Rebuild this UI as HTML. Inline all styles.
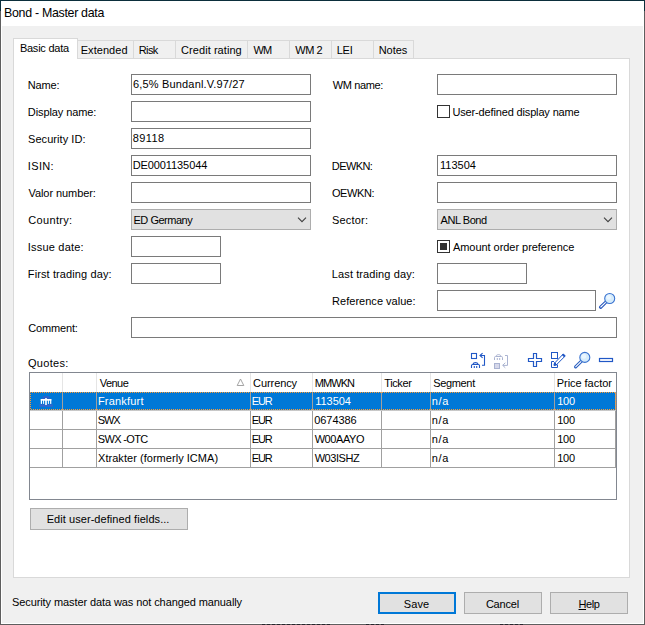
<!DOCTYPE html>
<html lang="en">
<head>
<meta charset="utf-8">
<title>Bond - Master data</title>
<style>
*{box-sizing:border-box;margin:0;padding:0}
html,body{width:645px;height:625px;overflow:hidden;background:#f0f0f0}
body{position:relative;font-family:"Liberation Sans",sans-serif;font-size:11px;color:#000;line-height:13px}
.a{position:absolute}
.tx{position:absolute;white-space:nowrap;z-index:5}
#win{position:absolute;left:0;top:0;width:645px;height:625px;background:#f0f0f0;border:1px solid #5e5e5e;border-top-color:#0b2e3b}
#win i{position:absolute;left:0;top:0;width:643px;height:623px;border:1px solid #fff;border-top:none}
#title{position:absolute;left:1px;top:1px;width:643px;height:25px;background:#fff}
.tab{position:absolute;top:40px;height:18px;border-top:1px solid #d9d9d9;border-right:1px solid #d9d9d9;z-index:2}
#seltab{position:absolute;left:13px;top:38px;width:65px;height:21px;background:#fff;border:1px solid #d9d9d9;border-bottom:none;z-index:3}
#page{position:absolute;left:13px;top:58px;width:617px;height:520px;background:#fff;border:1px solid #d9d9d9;z-index:1}
.inp{position:absolute;height:21px;width:180px;background:#fff;border:1px solid #7a7a7a;z-index:2}
.cmb{position:absolute;height:21px;width:180px;background:#e1e1e1;border:1px solid #adadad;z-index:2}
.chk{position:absolute;width:13px;height:13px;border:1px solid #333;background:#fff;z-index:2}
.btn{position:absolute;height:22px;width:78px;background:#e1e1e1;border:1px solid #adadad;z-index:2}
#grid{position:absolute;left:29px;top:372px;width:588px;height:128px;background:#fff;border:1px solid #828790;z-index:2}
.vl{position:absolute;width:1px;background:#a0a0a0;z-index:3}
.hl{position:absolute;height:1px;background:#a0a0a0;z-index:3}
.hv{position:absolute;width:1px;background:#e5e5e5;z-index:3}
svg{position:absolute;z-index:4;overflow:visible}
</style>
</head>
<body>
<div id="win"><i></i></div>
<div id="title"></div>
<div class="a" style="left:0;top:0;width:1px;height:11px;background:#0b2e3b"></div>
<div class="a" style="left:644px;top:0;width:1px;height:11px;background:#0b2e3b"></div>

<div class="a" style="left:262px;top:624px;width:70px;height:1px;z-index:6;background:repeating-linear-gradient(90deg,#26262e 0,#26262e 3px,#5e5e5e 3px,#5e5e5e 5px)"></div>
<div class="a" style="left:366px;top:624px;width:18px;height:1px;z-index:6;background:repeating-linear-gradient(90deg,#26262e 0,#26262e 3px,#5e5e5e 3px,#5e5e5e 5px)"></div>
<div class="a" style="left:500px;top:624px;width:25px;height:1px;z-index:6;background:repeating-linear-gradient(90deg,#26262e 0,#26262e 3px,#5e5e5e 3px,#5e5e5e 5px)"></div>
<div id="seltab"></div>
<div class="tab" style="left:78px;width:56px"></div>
<div class="tab" style="left:134px;width:42px"></div>
<div class="tab" style="left:176px;width:72px"></div>
<div class="tab" style="left:248px;width:42px"></div>
<div class="tab" style="left:290px;width:42px"></div>
<div class="tab" style="left:332px;width:42px"></div>
<div class="tab" style="left:374px;width:40px"></div>
<div id="page"></div>

<!-- inputs left -->
<div class="inp" style="left:131px;top:74px"></div>
<div class="inp" style="left:131px;top:101px"></div>
<div class="inp" style="left:131px;top:128px"></div>
<div class="inp" style="left:131px;top:155px"></div>
<div class="inp" style="left:131px;top:182px"></div>
<div class="cmb" style="left:131px;top:209px"></div>
<svg style="left:297px;top:216px" width="10" height="7" viewBox="0 0 10 7"><path d="M1 1.7 L5 5.7 L9 1.7" fill="none" stroke="#404040" stroke-width="1.1"/></svg>
<div class="inp" style="left:131px;top:236px;width:90px"></div>
<div class="inp" style="left:131px;top:263px;width:90px"></div>
<div class="inp" style="left:131px;top:317px;width:486px"></div>
<!-- inputs right -->
<div class="inp" style="left:437px;top:74px"></div>
<div class="chk" style="left:437px;top:105px"></div>
<div class="inp" style="left:437px;top:155px"></div>
<div class="inp" style="left:437px;top:182px"></div>
<div class="cmb" style="left:437px;top:209px"></div>
<svg style="left:603px;top:216px" width="10" height="7" viewBox="0 0 10 7"><path d="M1 1.7 L5 5.7 L9 1.7" fill="none" stroke="#404040" stroke-width="1.1"/></svg>
<div class="chk" style="left:437px;top:240px"><div class="a" style="left:2px;top:2px;width:7px;height:7px;background:#333"></div></div>
<div class="inp" style="left:437px;top:263px;width:90px"></div>
<div class="inp" style="left:437px;top:290px;width:159px"></div>

<!-- magnifier next to reference value -->
<svg style="left:597px;top:291px" width="20" height="20" viewBox="0 0 20 20">
  <path d="M8.6 11.4 L3.6 16.2" stroke="#2455bd" stroke-width="3.3" stroke-linecap="round"/>
  <path d="M8.6 11.4 L3.8 16.0" stroke="#fff" stroke-width="1.1" stroke-linecap="round"/>
  <circle cx="12.7" cy="7.5" r="5" fill="#d6ecfb" stroke="#3a73d0" stroke-width="1.1"/>
  <circle cx="11.6" cy="6.4" r="2.4" fill="#eaf6ff"/>
</svg>

<!-- toolbar icons -->
<svg style="left:468px;top:350px" width="150" height="22" viewBox="468 350 150 22" fill="none" stroke="#2158c6" stroke-width="1">
  <!-- icon1 -->
  <rect x="471.5" y="353.5" width="5" height="5" stroke-width="1.1"/>
  <path d="M482.6 353.1 L480 355.5 L482.6 357.9 M480.2 355.5 H484.5 V365.3 H482" stroke-width="1.1"/>
  <path d="M473 364.2 C473.6 362.1 477.4 362.1 478 364.2" stroke-width="1.1"/>
  <path d="M471.5 368 V365.6 Q471.5 364.5 472.6 364.5 H478.4 Q479.5 364.5 479.5 365.6 V368 M474.3 366 V368 M476.7 366 V368" stroke-width="1.1"/>
  <!-- icon2 (disabled) -->
  <g stroke="#aab3d1">
  <path d="M496 356.2 C496.6 354.1 500.4 354.1 501 356.2"/>
  <path d="M494.5 360 V357.6 Q494.5 356.5 495.6 356.5 H501.4 Q502.5 356.5 502.5 357.6 V360 M497.3 358 V360 M499.7 358 V360"/>
  <path d="M505 355.5 H507.5 V365.4 H502.8 M505.3 362.8 L502.7 365.3 L505.3 367.8"/>
  <rect x="494.5" y="363.5" width="5" height="5" fill="#d6d8ea"/>
  </g>
  <!-- plus -->
  <path d="M533.5 353.5 H536.5 V358.5 H541.5 V361.5 H536.5 V366.5 H533.5 V361.5 H528.5 V358.5 H533.5 Z" stroke-width="1.2"/>
  <!-- edit -->
  <rect x="551.5" y="352.5" width="6" height="6"/>
  <path d="M554 361.5 H551.5 V367.5 H557.5 V364.5"/>
  <path d="M563.2 354 L565.2 356 L556.5 364.7 L554.2 365.2 L554.7 363 Z" />
  <path d="M562.5 354.2 L564.8 356.5" stroke-width="2"/>
  <path d="M554 365.4 L554.6 362.6 L556.8 364.8 Z" fill="#2158c6"/>
  <!-- magnifier -->
  <path d="M581.2 361.3 L575.6 366.8" stroke="#2b5fc0" stroke-width="3.2" stroke-linecap="round"/>
  <path d="M581.2 361.3 L575.8 366.6" stroke="#fff" stroke-width="1.1" stroke-linecap="round"/>
  <circle cx="584.8" cy="357.4" r="5" fill="#d6ecfb" stroke="#3a73d0" stroke-width="1.1"/>
  <circle cx="583.8" cy="356.4" r="2.4" fill="#eaf6ff" stroke="none"/>
  <!-- minus -->
  <rect x="599.5" y="358.5" width="13" height="3" stroke-width="1.2"/>
</svg>

<!-- grid -->
<div id="grid"></div>
<!-- selected row -->
<div class="a" style="left:30px;top:392px;width:586px;height:18px;background:#0078d7;z-index:3"></div>
<div class="a" style="left:30px;top:392px;width:586px;height:1px;z-index:4;background:repeating-linear-gradient(90deg,#ff9c32 0,#ff9c32 1px,transparent 1px,transparent 2px)"></div>
<div class="a" style="left:30px;top:409px;width:586px;height:1px;z-index:4;background:repeating-linear-gradient(90deg,transparent 0,transparent 1px,#ff9c32 1px,#ff9c32 2px)"></div>
<div class="a" style="left:30px;top:392px;width:1px;height:18px;z-index:4;background:repeating-linear-gradient(180deg,#ff9c32 0,#ff9c32 1px,transparent 1px,transparent 2px)"></div>
<div class="a" style="left:615px;top:392px;width:1px;height:18px;z-index:4;background:repeating-linear-gradient(180deg,transparent 0,transparent 1px,#ff9c32 1px,#ff9c32 2px)"></div>
<!-- header verticals -->
<div class="hv" style="left:62px;top:373px;height:19px"></div>
<div class="hv" style="left:96px;top:373px;height:19px"></div>
<div class="hv" style="left:250px;top:373px;height:19px"></div>
<div class="hv" style="left:312px;top:373px;height:19px"></div>
<div class="hv" style="left:381px;top:373px;height:19px"></div>
<div class="hv" style="left:430px;top:373px;height:19px"></div>
<div class="hv" style="left:554px;top:373px;height:19px"></div>
<!-- data verticals -->
<div class="vl" style="left:62px;top:392px;height:76px"></div>
<div class="vl" style="left:96px;top:392px;height:76px"></div>
<div class="vl" style="left:250px;top:392px;height:76px"></div>
<div class="vl" style="left:312px;top:392px;height:76px"></div>
<div class="vl" style="left:381px;top:392px;height:76px"></div>
<div class="vl" style="left:430px;top:392px;height:76px"></div>
<div class="vl" style="left:554px;top:392px;height:76px"></div>
<div class="vl" style="left:615px;top:392px;height:76px"></div>
<!-- horizontals -->
<div class="hl" style="left:30px;top:410px;width:586px;background:#c8c8c8"></div>
<div class="hl" style="left:30px;top:429px;width:586px"></div>
<div class="hl" style="left:30px;top:448px;width:586px"></div>
<div class="hl" style="left:30px;top:467px;width:586px"></div>
<!-- sort triangle -->
<svg style="left:236px;top:378px" width="9" height="9" viewBox="0 0 9 9"><path d="M4.5 1 L7.8 7.5 H1.2 Z" fill="none" stroke="#9a9a9a" stroke-width="0.9"/></svg>
<!-- row icon -->
<svg style="left:38px;top:395px" width="16" height="13" viewBox="38 395 16 13" shape-rendering="auto">
  <path d="M41.4 399.2 L43.6 395.9 H48.6 L50.8 399.2 Z" fill="#2d62cb"/>
  <rect x="39.3" y="404.3" width="13.4" height="2.4" fill="#3566cc"/>
  <rect x="40.8" y="399" width="10.5" height="1.7" fill="#fff"/>
  <rect x="40.8" y="399" width="1.2" height="4.9" fill="#fff"/>
  <rect x="43.1" y="399" width="1" height="4.9" fill="#fff"/>
  <rect x="45.2" y="398" width="1.6" height="7" fill="#fff"/>
  <rect x="47.9" y="399" width="1" height="4.9" fill="#fff"/>
  <rect x="50.1" y="399" width="1.2" height="4.9" fill="#fff"/>
</svg>

<!-- buttons -->
<div class="btn" style="left:30px;top:508px;width:158px"></div>
<div class="btn" style="left:378px;top:592px;border:2px solid #0078d7"></div>
<div class="btn" style="left:464px;top:592px"></div>
<div class="btn" style="left:550px;top:592px"></div>

<span class="tx" id="t0" style="left:4.06px;top:5px;font-size:12.4px;line-height:16px;letter-spacing:-0.300px;">Bond - Master data</span>
<span class="tx" id="t1" style="left:19.89px;top:42px;letter-spacing:-0.232px;z-index:4;">Basic data</span>
<span class="tx" id="t2" style="left:80.71px;top:44px;letter-spacing:0.046px;z-index:4;">Extended</span>
<span class="tx" id="t3" style="left:138.80px;top:44px;letter-spacing:-0.645px;z-index:4;">Risk</span>
<span class="tx" id="t4" style="left:181.09px;top:44px;letter-spacing:0.057px;z-index:4;">Credit rating</span>
<span class="tx" id="t5" style="left:253.50px;top:44px;letter-spacing:-1.000px;z-index:4;">WM</span>
<span class="tx" id="t6" style="left:295.37px;top:44px;letter-spacing:-0.513px;z-index:4;">WM 2</span>
<span class="tx" id="t7" style="left:336.76px;top:44px;letter-spacing:-0.278px;z-index:4;">LEI</span>
<span class="tx" id="t8" style="left:378.70px;top:44px;letter-spacing:-0.020px;z-index:4;">Notes</span>
<span class="tx" id="t9" style="left:27.83px;top:79px;letter-spacing:-0.187px;">Name:</span>
<span class="tx" id="t10" style="left:27.83px;top:106px;letter-spacing:-0.095px;">Display name:</span>
<span class="tx" id="t11" style="left:28.05px;top:133px;letter-spacing:0.050px;">Security ID:</span>
<span class="tx" id="t12" style="left:27.84px;top:160px;letter-spacing:0.349px;">ISIN:</span>
<span class="tx" id="t13" style="left:28.52px;top:187px;letter-spacing:-0.075px;">Valor number:</span>
<span class="tx" id="t14" style="left:28.34px;top:214px;letter-spacing:0.325px;">Country:</span>
<span class="tx" id="t15" style="left:27.84px;top:241px;letter-spacing:0.191px;">Issue date:</span>
<span class="tx" id="t16" style="left:27.83px;top:268px;letter-spacing:0.106px;">First trading day:</span>
<span class="tx" id="t17" style="left:28.34px;top:322px;letter-spacing:-0.166px;">Comment:</span>
<span class="tx" id="t18" style="left:27.94px;top:357px;letter-spacing:0.324px;">Quotes:</span>
<span class="tx" id="t19" style="left:332.64px;top:79px;letter-spacing:-0.360px;">WM name:</span>
<span class="tx" id="t20" style="left:331.83px;top:160px;letter-spacing:-0.598px;">DEWKN:</span>
<span class="tx" id="t21" style="left:331.94px;top:187px;letter-spacing:-0.395px;">OEWKN:</span>
<span class="tx" id="t22" style="left:332.05px;top:214px;letter-spacing:0.181px;">Sector:</span>
<span class="tx" id="t23" style="left:331.83px;top:268px;letter-spacing:0.104px;">Last trading day:</span>
<span class="tx" id="t24" style="left:332.12px;top:295px;letter-spacing:0.018px;">Reference value:</span>
<span class="tx" id="t25" style="left:452.38px;top:106px;letter-spacing:-0.146px;">User-defined display name</span>
<span class="tx" id="t26" style="left:452.95px;top:241px;letter-spacing:-0.043px;">Amount order preference</span>
<span class="tx" id="t27" style="left:133.02px;top:78px;letter-spacing:0.169px;">6,5% Bundanl.V.97/27</span>
<span class="tx" id="t28" style="left:132.81px;top:132px;letter-spacing:0.386px;">89118</span>
<span class="tx" id="t29" style="left:132.63px;top:159px;letter-spacing:-0.085px;">DE0001135044</span>
<span class="tx" id="t30" style="left:439.99px;top:159px;letter-spacing:0.005px;">113504</span>
<span class="tx" id="t31" style="left:133.52px;top:214px;letter-spacing:-0.484px;">ED Germany</span>
<span class="tx" id="t32" style="left:440.61px;top:214px;letter-spacing:-0.457px;">ANL Bond</span>
<span class="tx" id="t33" style="left:99.71px;top:377px;letter-spacing:-0.524px;">Venue</span>
<span class="tx" id="t34" style="left:253.09px;top:377px;letter-spacing:-0.084px;">Currency</span>
<span class="tx" id="t35" style="left:314.76px;top:377px;letter-spacing:-0.941px;">MMWKN</span>
<span class="tx" id="t36" style="left:384.21px;top:377px;letter-spacing:-0.369px;">Ticker</span>
<span class="tx" id="t37" style="left:433.13px;top:377px;letter-spacing:-0.321px;">Segment</span>
<span class="tx" id="t38" style="left:556.76px;top:377px;letter-spacing:-0.043px;">Price factor</span>
<span class="tx" id="t39" style="left:97.89px;top:395px;letter-spacing:0.196px;color:#fff;">Frankfurt</span>
<span class="tx" id="t40" style="left:251.83px;top:395px;letter-spacing:-1.173px;color:#fff;">EUR</span>
<span class="tx" id="t41" style="left:315.23px;top:395px;letter-spacing:-0.027px;color:#fff;">113504</span>
<span class="tx" id="t42" style="left:431.68px;top:395px;letter-spacing:0.722px;color:#fff;">n/a</span>
<span class="tx" id="t43" style="left:557.27px;top:395px;letter-spacing:-0.300px;color:#fff;">100</span>
<span class="tx" id="t44" style="left:97.86px;top:414px;letter-spacing:-1.200px;">SWX</span>
<span class="tx" id="t45" style="left:251.83px;top:414px;letter-spacing:-1.173px;">EUR</span>
<span class="tx" id="t46" style="left:314.25px;top:414px;letter-spacing:-0.061px;">0674386</span>
<span class="tx" id="t47" style="left:431.68px;top:414px;letter-spacing:0.722px;">n/a</span>
<span class="tx" id="t48" style="left:557.27px;top:414px;letter-spacing:-0.300px;">100</span>
<span class="tx" id="t49" style="left:97.86px;top:433px;letter-spacing:-0.658px;">SWX -OTC</span>
<span class="tx" id="t50" style="left:251.83px;top:433px;letter-spacing:-1.173px;">EUR</span>
<span class="tx" id="t51" style="left:314.63px;top:433px;letter-spacing:-0.419px;">W00AAYO</span>
<span class="tx" id="t52" style="left:431.68px;top:433px;letter-spacing:0.722px;">n/a</span>
<span class="tx" id="t53" style="left:557.27px;top:433px;letter-spacing:-0.300px;">100</span>
<span class="tx" id="t54" style="left:98.05px;top:452px;letter-spacing:0.038px;">Xtrakter (formerly ICMA)</span>
<span class="tx" id="t55" style="left:251.83px;top:452px;letter-spacing:-1.173px;">EUR</span>
<span class="tx" id="t56" style="left:314.63px;top:452px;letter-spacing:-0.445px;">W03ISHZ</span>
<span class="tx" id="t57" style="left:431.68px;top:452px;letter-spacing:0.722px;">n/a</span>
<span class="tx" id="t58" style="left:557.27px;top:452px;letter-spacing:-0.300px;">100</span>
<span class="tx" id="t59" style="left:46.64px;top:513px;letter-spacing:0.067px;">Edit user-defined fields...</span>
<span class="tx" id="t60" style="left:403.82px;top:598px;letter-spacing:0.057px;">Save</span>
<span class="tx" id="t61" style="left:485.89px;top:598px;letter-spacing:-0.207px;">Cancel</span>
<span class="tx" id="t62" style="left:578.52px;top:598px;letter-spacing:-0.425px;"><u>H</u>elp</span>
<span class="tx" id="t63" style="left:12.00px;top:596px;letter-spacing:-0.093px;">Security master data was not changed manually</span>
</body>
</html>
